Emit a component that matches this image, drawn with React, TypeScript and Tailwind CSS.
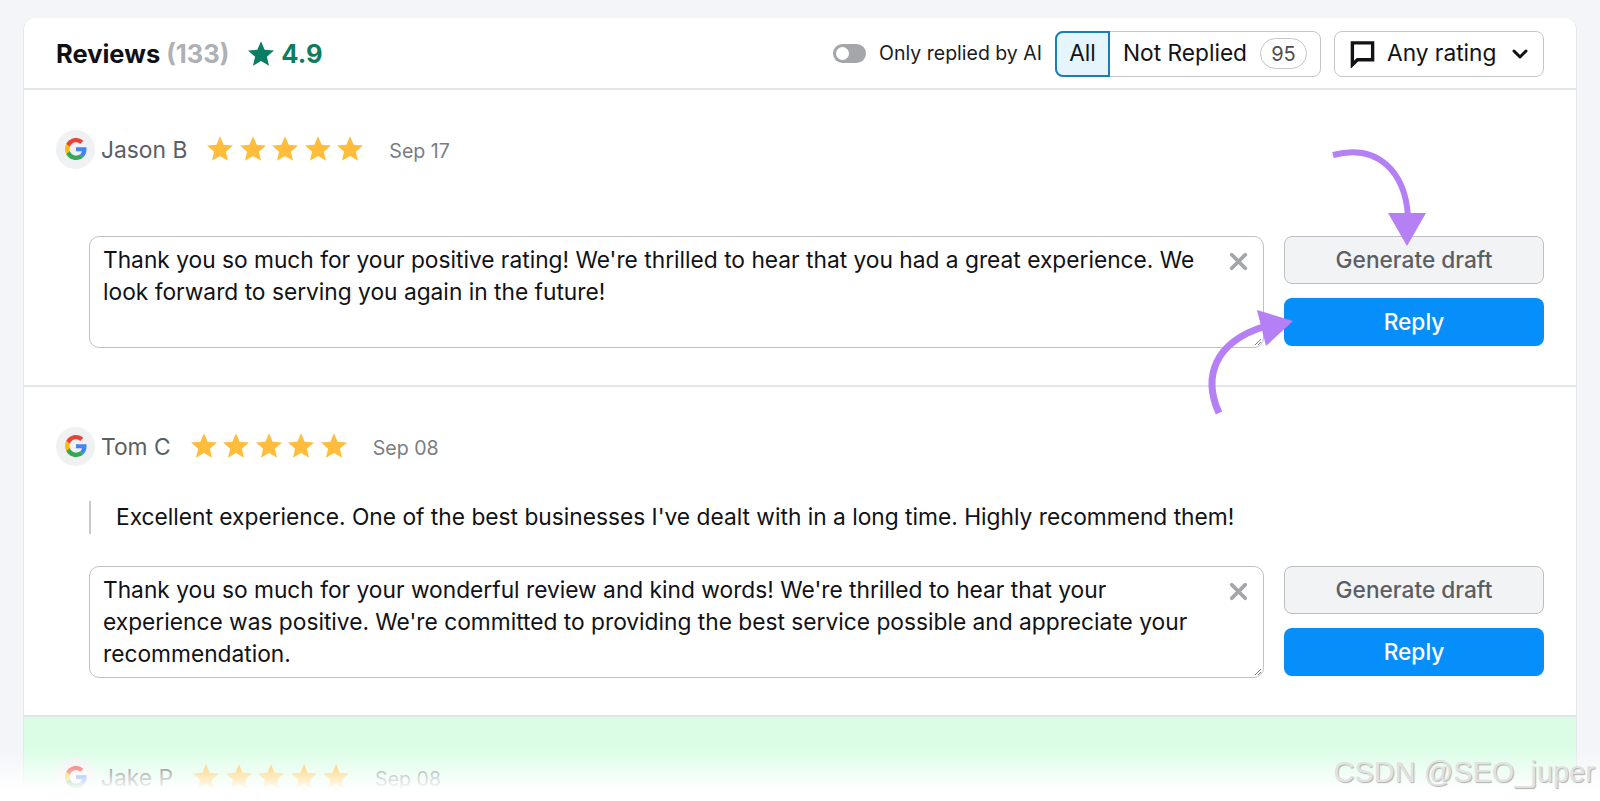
import React from 'react';
import { X, ChevronDown } from 'lucide-react';

const STAR = 'M12 17.27L18.18 21l-1.64-7.03L22 9.24l-7.19-.61L12 2 9.19 8.63 2 9.24l5.46 4.73L5.82 21z';

const Star: React.FC<{ className: string; color: string }> = ({ className, color }) => (
  <svg viewBox="2 2 20 19" className={className} fill={color}>
    <path d={STAR} />
  </svg>
);

const GoogleLogo = () => (
  <svg viewBox="0 0 48 48" className="w-[22px] h-[22px]">
    <path fill="#EA4335" d="M24 9.5c3.54 0 6.71 1.22 9.21 3.6l6.85-6.85C35.9 2.38 30.47 0 24 0 14.62 0 6.51 5.38 2.56 13.22l7.98 6.19C12.43 13.72 17.74 9.5 24 9.5z" />
    <path fill="#4285F4" d="M46.98 24.55c0-1.57-.15-3.09-.38-4.55H24v9.02h12.94c-.58 2.96-2.26 5.48-4.78 7.18l7.73 6c4.51-4.18 7.09-10.36 7.09-17.65z" />
    <path fill="#FBBC05" d="M10.53 28.59c-.48-1.45-.76-2.99-.76-4.59s.27-3.14.76-4.59l-7.98-6.19C.92 16.46 0 20.12 0 24c0 3.88.92 7.54 2.56 10.78l7.97-6.19z" />
    <path fill="#34A853" d="M24 48c6.48 0 11.93-2.13 15.89-5.81l-7.73-6c-2.15 1.45-4.92 2.3-8.16 2.3-6.26 0-11.57-4.22-13.47-9.91l-7.98 6.19C6.51 42.62 14.62 48 24 48z" />
  </svg>
);

const ReviewHead: React.FC<{ name: string; date: string }> = ({ name, date }) => (
  <div className="flex items-center h-[40px]">
    <div className="w-[39px] h-[39px] rounded-full bg-[#f0f1f2] flex items-center justify-center">
      <GoogleLogo />
    </div>
    <span className="ml-[6px] text-[22.8px] text-[#5b5e63] mt-[3px]">{name}</span>
    <div className="ml-[20px] flex gap-[6.5px] -mt-[1px]">
      {[0, 1, 2, 3, 4].map(i => (
        <Star key={i} className="w-[26px] h-[25px]" color="#ffbd3b" />
      ))}
    </div>
    <span className="ml-[26px] text-[19.6px] text-[#7a7d82] mt-[5px]">{date}</span>
  </div>
);

const ReplyBox: React.FC<{ text: string }> = ({ text }) => (
  <div className="flex ml-[33px] gap-[20px]">
    <div className="relative w-[1175px] h-[112px] border border-[#bfc1c4] rounded-[10px] pl-[13px] pr-[50px] pt-[7px] text-[22.74px] leading-[32.2px] text-[#111215]">
      {text}
      <X className="absolute right-[11px] top-[11px] w-[27px] h-[27px] text-[#a4a6a9]" strokeWidth={3.4} />
      <svg viewBox="0 0 6 6" className="absolute right-[2px] bottom-[2px] w-[6px] h-[6px]" stroke="#77797c" strokeWidth="1">
        <path d="M0 6L6 0M3 6L6 3" />
      </svg>
    </div>
    <div className="w-[260px] flex flex-col gap-[14px]">
      <button className="h-[48px] rounded-[8px] border border-[#bcbec1] bg-[#f2f3f5] text-[22.7px] font-medium text-[#5b5e63]">
        Generate draft
      </button>
      <button className="h-[48px] rounded-[8px] bg-[#068ffb] text-[22.7px] font-medium text-white">
        Reply
      </button>
    </div>
  </div>
);

export default function App() {
  return (
    <div className="relative h-[801px] overflow-hidden bg-[#f4f5f9] pt-[18px] px-[23px] font-['Inter',sans-serif]">
      <div className="w-[1554px] h-[783px] bg-white rounded-t-[12px] border-x border-[#e6e7ea] flex flex-col">
        <div className="h-[72px] px-[32px] flex items-center border-b-2 border-[#e4e5e8] shrink-0">
          <span className="text-[25.5px] font-bold text-[#0f1013] mt-[2px]">Reviews</span>
          <span className="ml-[6px] text-[25.5px] font-bold text-[#aeb0b3] mt-[2px]">(133)</span>
          <Star className="ml-[19px] w-[26px] h-[25px]" color="#0a7d62" />
          <span className="ml-[7px] text-[25.5px] font-bold text-[#0a7d62] mt-[2px]">4.9</span>
          <div className="ml-auto flex items-center mt-[1px]">
            <div className="w-[33px] h-[19px] rounded-full bg-[#a4a6a9] flex items-center pl-[3px]">
              <div className="w-[13px] h-[13px] rounded-full bg-white" />
            </div>
            <span className="ml-[13px] text-[19.5px] text-[#1a1b1f]">Only replied by AI</span>
            <div className="ml-[13px] flex h-[46px] w-[266px] border border-[#c4c6c9] rounded-[8px]">
              <div className="-m-px w-[55px] h-[46px] flex items-center justify-center bg-[#e5f5fe] border-2 border-[#1c7cb8] rounded-l-[8px] text-[22.7px] text-[#111215]">
                All
              </div>
              <div className="flex items-center pl-[14px] text-[22.7px] text-[#111215]">
                Not Replied
                <span className="ml-[13px] w-[47px] h-[31px] rounded-full border border-[#c4c6c9] flex items-center justify-center text-[20px] text-[#4c4f54]">
                  95
                </span>
              </div>
            </div>
            <div className="ml-[13px] flex items-center h-[46px] w-[210px] border border-[#c4c6c9] rounded-[8px] pl-[14px] text-[22.7px] text-[#111215]">
              <svg viewBox="0 0 24 24" className="w-[27px] h-[29px]" fill="none" stroke="#111215" strokeWidth="3">
                <path d="M3 2.5h18v15H7.5L3 22z" strokeLinejoin="miter" />
              </svg>
              <span className="ml-[11px]">Any rating</span>
              <ChevronDown className="ml-[12px] w-[24px] h-[24px]" strokeWidth={3} />
            </div>
          </div>
        </div>

        <div className="h-[297px] shrink-0 px-[32px] pt-[39px] border-b-2 border-[#e4e5e8]">
          <ReviewHead name="Jason B" date="Sep 17" />
          <div className="mt-[67px]">
            <ReplyBox text="Thank you so much for your positive rating! We're thrilled to hear that you had a great experience. We look forward to serving you again in the future!" />
          </div>
        </div>

        <div className="h-[330px] shrink-0 px-[32px] pt-[39px] border-b-2 border-[#e4e5e8]">
          <ReviewHead name="Tom C" date="Sep 08" />
          <div className="ml-[33px] mt-[35px] h-[33px] border-l-2 border-[#c8c9cc] pl-[25px] flex items-center text-[22.74px] text-[#111215]">
            Excellent experience. One of the best businesses I've dealt with in a long time. Highly recommend them!
          </div>
          <div className="mt-[32px]">
            <ReplyBox text="Thank you so much for your wonderful review and kind words! We're thrilled to hear that your experience was positive. We're committed to providing the best service possible and appreciate your recommendation." />
          </div>
        </div>

        <div className="flex-1 bg-[#dbfde6] px-[32px] pt-[40px]">
          <ReviewHead name="Jake P" date="Sep 08" />
        </div>
      </div>

      {/* fade out at the bottom edge */}
      <div className="absolute left-0 right-0 bottom-0 h-[52px] bg-gradient-to-b from-white/0 to-white to-[80%]" />

      {/* annotation arrows */}
      <svg className="absolute left-0 top-0 pointer-events-none" width="1600" height="801" fill="none">
        <path d="M1333 155C1378 143 1405 172 1408 216" stroke="#b580f5" strokeWidth="6" />
        <path d="M1388 213L1426 213L1407 246z" fill="#b580f5" />
        <path d="M1219 413C1203 378 1213 342 1266 326" stroke="#b580f5" strokeWidth="7" />
        <path d="M1257 310L1293 321L1266 346z" fill="#b580f5" />
      </svg>

      <div className="absolute right-[5px] bottom-[11px] font-['Liberation_Sans',sans-serif] text-[29px] leading-[36px] text-[#e2e2e2] [text-shadow:1px_1px_1px_#b0b0b0]">
        CSDN @SEO_juper
      </div>
    </div>
  );
}
